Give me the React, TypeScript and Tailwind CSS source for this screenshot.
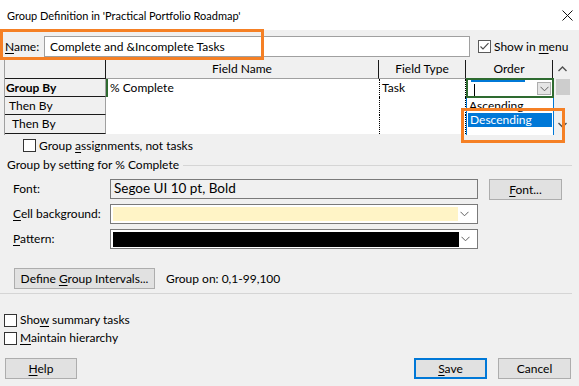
import React from "react";

const Chevron = ({ className = "" }: { className?: string }) => (
  <svg width="9" height="6" viewBox="0 0 9 6" className={className}>
    <path d="M0.5 0.8 L4.5 4.8 L8.5 0.8" fill="none" stroke="#606060" strokeWidth="1" />
  </svg>
);

const Check = ({ checked = false }: { checked?: boolean }) => (
  <span
    className={`w-[13px] h-[13px] shrink-0 border bg-white flex items-center justify-center ${
      checked ? "border-[#5a5a5a]" : "border-[#333333]"
    }`}
  >
    {checked && (
      <svg width="11" height="11" viewBox="0 0 11 11">
        <path d="M1.5 5.5 L4 8 L9.5 2.2" fill="none" stroke="#4a4a4a" strokeWidth="1.1" />
      </svg>
    )}
  </span>
);

const U = ({ children }: { children: React.ReactNode }) => (
  <span className="underline underline-offset-[2px] decoration-1">{children}</span>
);

export default function App() {
  return (
    <div className="w-[579px] h-[386px] bg-[#f0f0f0] relative overflow-hidden font-[family-name:'Segoe_UI','Lato',sans-serif] text-[12px] leading-none text-black flex flex-col">
      {/* Title bar */}
      <div className="h-[30px] bg-white flex items-center justify-between pl-[7px] pr-[6px] shrink-0">
        <span className="text-[11px]">Group Definition in 'Practical Portfolio Roadmap'</span>
        <svg width="11" height="11" viewBox="0 0 11 11">
          <path d="M0.5 0.5 L10.5 10.5 M10.5 0.5 L0.5 10.5" stroke="#111" strokeWidth="1" />
        </svg>
      </div>

      {/* Name row */}
      <div className="mt-[6px] h-[21px] flex items-center shrink-0">
        <span className="w-[44px] pl-[5px]">
          <U>N</U>ame:
        </span>
        <div className="w-[426px] h-[21px] border border-[#a0a0a0] bg-white flex items-center pl-[5px]">
          Complete and &amp;Incomplete Tasks
        </div>
        <div className="ml-[8px] flex items-center">
          <Check checked />
          <span className="ml-[3px]">
            Show in <U>m</U>enu
          </span>
        </div>
      </div>

      {/* Grid */}
      <div className="mt-[3px] ml-[4px] w-[568px] h-[75px] relative flex shrink-0 border-l border-[#a0a0a0]">
        <div className="w-[548px] flex flex-col">
          {/* header */}
          <div className="h-[19px] flex bg-[#f0f0f0]">
            <div className="w-[101px] border-r border-b border-[#1a1a1a]" />
            <div className="w-[273px] border-r border-[#1a1a1a] border-b border-b-[#a0a0a0] flex items-center justify-center">
              Field Name
            </div>
            <div className="w-[87px] border-r border-[#1a1a1a] border-b border-b-[#a0a0a0] flex items-center justify-center">
              Field Type
            </div>
            <div className="w-[87px] border-r border-[#1a1a1a] border-b border-b-[#a0a0a0] flex items-center justify-center">
              Order
            </div>
          </div>
          {/* rows */}
          {[
            { label: "Group By", bold: true, field: "% Complete", type: "Task", pad: "pl-[1px]", h: "h-[18px]" },
            { label: "Then By", bold: false, field: "", type: "", pad: "pl-[4px]", h: "h-[18px]" },
            { label: "Then By", bold: false, field: "", type: "", pad: "pl-[7px]", h: "h-[19px]" },
          ].map((r, i) => (
            <div key={i} className={`${r.h} flex`}>
              <div
                className={`w-[101px] bg-[#f0f0f0] border-b border-b-[#1a1a1a] border-r border-r-[#a0a0a0] flex items-center ${r.pad} ${
                  r.bold ? "font-bold" : ""
                }`}
              >
                {r.label}
              </div>
              <div
                className={`w-[273px] bg-white flex items-center pl-[2px] ${
                  i === 0 ? "border-l-2 border-[#2e6b30]" : ""
                }`}
              >
                {r.field}
              </div>
              <div className="w-[87px] bg-white border-l border-r border-dotted border-black flex items-center pl-[2px]">
                {r.type}
              </div>
              <div className="w-[87px] bg-white" />
            </div>
          ))}
        </div>
        {/* scrollbar */}
        <div className="w-[20px] bg-[#f0f0f0] flex flex-col items-center">
          <svg width="9" height="6" viewBox="0 0 9 6" className="mt-[6px]">
            <path d="M0.5 5 L4.5 1 L8.5 5" fill="none" stroke="#505050" strokeWidth="1.4" />
          </svg>
          <div className="mt-[7px] w-[14px] h-[16px] bg-[#cdcdcd]" />
          <svg width="9" height="6" viewBox="0 0 9 6" className="mt-[27px]">
            <path d="M0.5 1 L4.5 5 L8.5 1" fill="none" stroke="#505050" strokeWidth="1.4" />
          </svg>
        </div>

        {/* active order cell (combo) */}
        <div className="absolute left-[461px] top-[18px] w-[88px] h-[20px] border-2 border-[#2e6b30] bg-white">
          <div className="absolute left-[3px] top-0 w-[54px] h-[2px] bg-[#0078d7]" />
          <div className="absolute left-[6px] top-[4px] w-[1px] h-[12px] bg-black" />
          <div className="absolute right-[1px] top-[2px] w-[14px] h-[13px] bg-[#e5e5e5] border border-[#adadad] flex items-center justify-center">
            <Chevron />
          </div>
        </div>
        {/* dropdown list */}
        <div className="absolute left-[461px] top-[38px] w-[88px] h-[37px] bg-white border-x border-[#0078d7] overflow-hidden">
          <div className="h-[15px] pl-[2px] flex items-end leading-none">
            <span className="mb-[1px]">Ascending</span>
          </div>
          <div className="mx-[1px] h-[14px] bg-[#0078d7] text-white flex items-center pl-[2px]">
            Descending
          </div>
        </div>
      </div>

      {/* Group assignments */}
      <div className="mt-[4px] ml-[23px] h-[13px] flex items-center shrink-0">
        <Check />
        <span className="ml-[3px]">
          Group <U>a</U>ssignments, not tasks
        </span>
      </div>

      {/* Section header */}
      <div className="mt-[5px] h-[16px] flex items-center shrink-0 pl-[7px] pr-[7px]">
        <span>Group by setting for % Complete</span>
        <div className="flex-1 ml-[4px] h-[1px] bg-[#d5d5d5]" />
      </div>

      {/* Font row */}
      <div className="mt-[6px] h-[21px] flex items-start shrink-0">
        <span className="w-[110px] pl-[13px] h-[20px] flex items-center">Font:</span>
        <div className="w-[368px] h-[20px] border border-[#7a7a7a] bg-[#f0f0f0] flex items-center pl-[3px] text-[13.5px]">
          Segoe UI 10 pt, Bold
        </div>
        <div className="ml-[11px] w-[73px] h-[21px] bg-[#e1e1e1] border border-[#adadad] flex items-center justify-center">
          <span>
            <U>F</U>ont...
          </span>
        </div>
      </div>

      {/* Cell background */}
      <div className="mt-[4px] h-[20px] flex items-center shrink-0">
        <span className="w-[110px] pl-[13px]">
          <U>C</U>ell background:
        </span>
        <div className="w-[368px] h-[20px] border border-[#7a7a7a] bg-white flex items-center pl-[2px] pr-[6px]">
          <div className="w-[345px] h-[14px] bg-[#fff4c6]" />
          <div className="flex-1 flex justify-center">
            <Chevron />
          </div>
        </div>
      </div>

      {/* Pattern */}
      <div className="mt-[5px] h-[20px] flex items-center shrink-0">
        <span className="w-[110px] pl-[13px]">
          <U>P</U>attern:
        </span>
        <div className="w-[368px] h-[20px] border border-[#7a7a7a] bg-white flex items-center pl-[2px] pr-[6px]">
          <div className="w-[346px] h-[15px] bg-black" />
          <div className="flex-1 flex justify-center">
            <Chevron />
          </div>
        </div>
      </div>

      {/* Define group intervals */}
      <div className="mt-[19px] h-[21px] flex items-center shrink-0 pl-[14px]">
        <div className="w-[141px] h-[21px] bg-[#e1e1e1] border border-[#adadad] flex items-center justify-center">
          <span>
            Define <U>G</U>roup Intervals...
          </span>
        </div>
        <span className="ml-[11px]">Group on: 0,1-99,100</span>
      </div>

      {/* divider */}
      <div className="mt-[4px] w-[572px] h-[1px] bg-[#d5d5d5] shrink-0" />

      {/* checkboxes */}
      <div className="mt-[19px] h-[14px] flex items-center pl-[4px] shrink-0">
        <Check />
        <span className="ml-[3px]">
          Sho<U>w</U> summary tasks
        </span>
      </div>
      <div className="mt-[4px] h-[14px] flex items-center pl-[4px] shrink-0">
        <Check />
        <span className="ml-[3px]">
          <U>M</U>aintain hierarchy
        </span>
      </div>

      {/* bottom buttons */}
      <div className="mt-[13px] h-[21px] flex items-center shrink-0 pl-[5px]">
        <div className="w-[72px] h-[21px] bg-[#e1e1e1] border border-[#adadad] flex items-center justify-center">
          <span>
            <U>H</U>elp
          </span>
        </div>
        <div className="ml-auto w-[73px] h-[21px] bg-[#e1e1e1] border-2 border-[#0078d7] flex items-center justify-center">
          <span>
            <U>S</U>ave
          </span>
        </div>
        <div className="ml-[11px] mr-[8px] w-[73px] h-[21px] bg-[#e1e1e1] border border-[#adadad] flex items-center justify-center">
          Cancel
        </div>
      </div>

      {/* orange highlight boxes */}
      <div className="absolute left-[0px] top-[29px] w-[264px] h-[31px] border-[3px] border-[#f58025] pointer-events-none" />
      <div className="absolute left-[461px] top-[108px] w-[104px] h-[35px] border-[3px] border-[#f58025] pointer-events-none" />
    </div>
  );
}
